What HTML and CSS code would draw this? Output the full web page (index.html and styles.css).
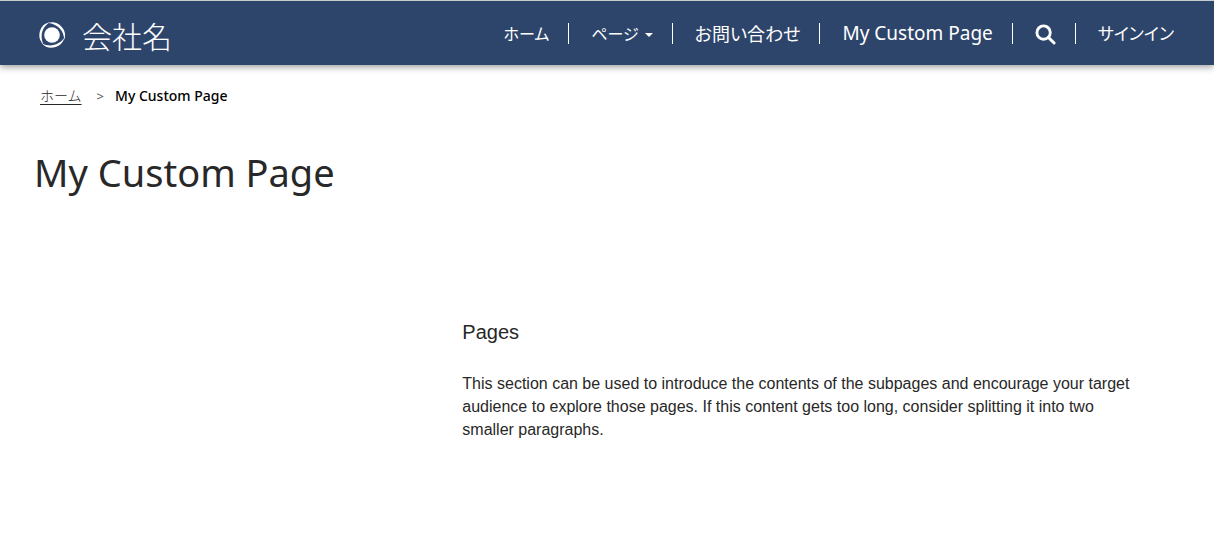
FILE: index.html
```html
<!DOCTYPE html>
<html lang="ja">
<head>
<meta charset="utf-8">
<meta name="viewport" content="width=device-width, initial-scale=1">
<title>My Custom Page</title>
<link rel="stylesheet" href="styles.css">
</head>
<body>
<header class="navbar">
  <a class="brand" href="#">
    <svg class="brand-logo" viewBox="0 0 28 28" aria-hidden="true">
      <circle cx="14" cy="14" r="7.8"/>
      <path d="M12 1A13.200 13.200 0 0 0 5.500 23.500C1.500 15 4 6 12 1Z"/>
      <path d="M12 1A13.200 13.200 0 0 0 5.500 23.500C1.500 15 4 6 12 1Z" transform="rotate(120 14 14)"/>
      <path d="M12 1A13.200 13.200 0 0 0 5.500 23.500C1.500 15 4 6 12 1Z" transform="rotate(240 14 14)"/>
    </svg>
    <span>会社名</span>
  </a>
  <nav>
    <ul class="menu">
      <li><a class="kana" href="#">ホーム</a></li>
      <li><a class="kana" href="#">ページ<span class="caret"></span></a></li>
      <li><a href="#">お問い合わせ</a></li>
      <li><a class="latin" href="#">My Custom Page</a></li>
      <li><button class="search" type="button" aria-label="検索">
        <svg viewBox="0 0 22 22" aria-hidden="true"><circle cx="9" cy="9" r="7"/><path d="m14 14 6 6"/></svg>
      </button></li>
      <li><a class="sign-in" href="#">サインイン</a></li>
    </ul>
  </nav>
</header>
<main>
  <nav class="breadcrumb">
    <a href="#">ホーム</a>
    <span class="divider">&gt;</span>
    <span class="current">My Custom Page</span>
  </nav>
  <h1>My Custom Page</h1>
  <section class="intro">
    <h2>Pages</h2>
    <p>This section can be used to introduce the contents of the subpages and encourage your target audience to explore those pages. If this content gets too long, consider splitting it into two smaller paragraphs.</p>
  </section>
</main>
</body>
</html>
```
FILE: styles.css
```css
* { box-sizing: border-box; }

body {
  margin: 0;
  background: #fff;
  color: #282828;
  font-family: "Noto Sans", "Noto Sans CJK JP", sans-serif;
}

.navbar {
  display: flex;
  align-items: center;
  justify-content: space-between;
  min-height: 65px;
  padding: 0 40px 0 38px;
  border-top: 1px solid #c5cdcb;
  background: #2e456b;
  box-shadow: 0 2px 7px rgba(0, 0, 0, 0.4);
  color: #fff;
}

.brand {
  display: flex;
  align-items: center;
  gap: 16px;
  padding-top: 4px;
  color: #fff;
  font-family: "Noto Sans CJK JP", sans-serif;
  font-size: 30px;
  font-weight: 300;
  line-height: 38px;
  text-decoration: none;
}

.brand-logo {
  width: 28px;
  height: 28px;
  fill: #fff;
}

.menu {
  display: flex;
  align-items: center;
  margin: 0;
  padding: 0;
  list-style: none;
}

.menu li {
  display: flex;
  align-items: center;
  height: 21px;
  padding: 0 19px 0 22px;
  border-left: 1px solid #fff;
}

.menu li:first-child { border-left: 0; }
.menu li:last-child { padding-right: 0; }

.menu a {
  display: flex;
  align-items: center;
  color: #fff;
  font-family: "Noto Sans CJK JP", sans-serif;
  font-feature-settings: "palt";
  font-size: 18px;
  line-height: 24px;
  text-decoration: none;
  white-space: nowrap;
}

.menu .kana { font-size: 16px; }
.menu .sign-in { font-size: 17px; }

.menu .latin {
  font-family: "Noto Sans", sans-serif;
  font-size: 19px;
}

.caret {
  margin: 3px 0 0 6px;
  border: 4px solid transparent;
  border-top-color: #fff;
  border-bottom: 0;
}

.search {
  display: flex;
  padding: 2px 0 0;
  border: 0;
  background: none;
}

.search svg {
  width: 21px;
  height: 21px;
  fill: none;
  stroke: #fff;
  stroke-width: 3;
  stroke-linecap: round;
}

.breadcrumb {
  display: flex;
  align-items: center;
  padding: 21px 40px 0;
  font-size: 14px;
  line-height: 20px;
}

.breadcrumb a {
  color: #282828;
  font-weight: 300;
  text-underline-offset: 3px;
}

.divider {
  margin: 0 11px 0 15px;
  color: #555;
  font-size: 13px;
}

.current {
  color: #000;
  font-weight: 500;
}

h1 {
  margin: 39px 34px 0;
  font-size: 38px;
  font-weight: 400;
  line-height: 54px;
}

.intro {
  width: 56%;
  margin: 121px 0 0 38%;
  padding-left: 1px;
  font-family: "Liberation Sans", Arial, sans-serif;
}

h2 {
  margin: 0 0 28px;
  font-size: 20px;
  font-weight: 400;
  line-height: 24px;
}

.intro p {
  margin: 0;
  font-size: 16px;
  line-height: 23px;
}
```
